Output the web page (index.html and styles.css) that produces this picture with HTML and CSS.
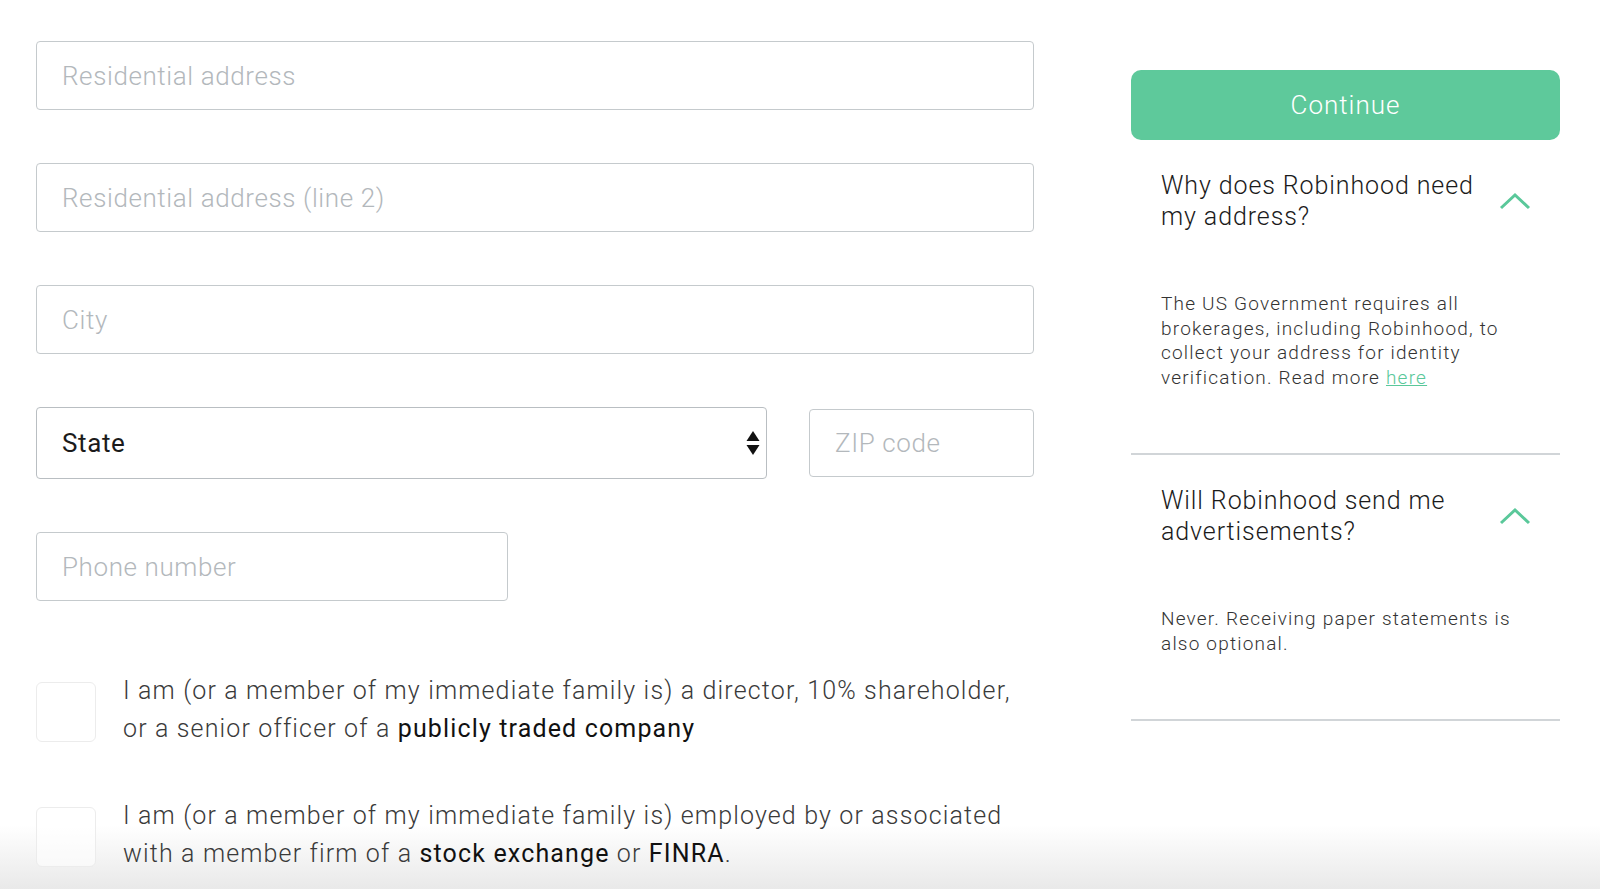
FILE: index.html
```html
<!DOCTYPE html>
<html lang="en">
<head>
<meta charset="utf-8">
<title>Address</title>
<link rel="stylesheet" href="styles.css">
</head>
<body>
<div class="fade"></div>
<div class="page">
  <main class="form">
    <div class="field"><span class="ph">Residential address</span></div>
    <div class="field"><span class="ph">Residential address (line 2)</span></div>
    <div class="field"><span class="ph">City</span></div>
    <div class="row">
      <div class="field select">
        <span class="val">State</span>
        <svg class="updown" width="14" height="26" viewBox="0 0 14 26"><path d="M7 1 L13.5 11 L0.5 11 Z" fill="#111"/><path d="M0.5 15 L13.5 15 L7 25 Z" fill="#111"/></svg>
      </div>
      <div class="field zip"><span class="ph">ZIP code</span></div>
    </div>
    <div class="field phone"><span class="ph">Phone number</span></div>

    <div class="checks">
      <label class="check">
        <span class="box"></span>
        <span class="ctext">I am (or a member of my immediate family is) a director, 10% shareholder, or a senior officer of a <b>publicly traded company</b></span>
      </label>
      <label class="check">
        <span class="box"></span>
        <span class="ctext">I am (or a member of my immediate family is) employed by or associated with a member firm of a <b>stock exchange</b> or <b>FINRA</b>.</span>
      </label>
    </div>
  </main>

  <aside class="side">
    <button class="continue">Continue</button>
    <section class="faq">
      <div class="q">
        <span class="qtext">Why does Robinhood need my address?</span>
        <svg class="chev" width="32" height="18" viewBox="0 0 32 18"><path d="M2 16 L16 3 L30 16" fill="none" stroke="#5ac89a" stroke-width="3"/></svg>
      </div>
      <p class="a">The US Government requires all brokerages, including Robinhood, to collect your address for identity verification. Read more <a href="#">here</a></p>
    </section>
    <section class="faq">
      <div class="q">
        <span class="qtext">Will Robinhood send me advertisements?</span>
        <svg class="chev" width="32" height="18" viewBox="0 0 32 18"><path d="M2 16 L16 3 L30 16" fill="none" stroke="#5ac89a" stroke-width="3"/></svg>
      </div>
      <p class="a">Never. Receiving paper statements is also optional.</p>
    </section>
  </aside>
</div>
</body>
</html>
```

FILE: styles.css
```css
html, body {
  margin: 0;
  padding: 0;
  background: #fff;
  height: 889px;
  overflow: hidden;
}
body {
  font-family: Roboto, "Liberation Sans", sans-serif;
  font-weight: 300;
  color: #222;
  position: relative;
}
.page {
  position: relative;
  z-index: 1;
  display: flex;
  padding: 41px 40px 0 36px;
  gap: 97px;
}
.form {
  width: 998px;
  display: flex;
  flex-direction: column;
  gap: 53px;
}
.field {
  box-sizing: border-box;
  height: 69px;
  border: 1px solid #c5cacd;
  border-radius: 4px;
  display: flex;
  align-items: center;
  padding: 0 25px;
  font-size: 26px;
  letter-spacing: 0.6px;
  background: #fff;
}
.ph { color: #b3b8bc; }
.row {
  display: flex;
  gap: 42px;
  align-items: center;
}
.select {
  width: 731px;
  height: 72px;
  justify-content: space-between;
  padding-right: 6px;
  border-color: #b9bec2;
}
.val { color: #1b1b1b; font-weight: 400; }
.zip { width: 225px; height: 68px; }
.phone { width: 472px; }
.checks {
  margin-top: 28px;
  display: flex;
  flex-direction: column;
  gap: 59px;
}
.check {
  display: flex;
  align-items: flex-start;
  gap: 27px;
}
.box {
  flex: none;
  box-sizing: border-box;
  width: 60px;
  height: 60px;
  border: 1px solid #ececec;
  border-radius: 6px;
  background: rgba(255,255,255,0.6);
}
.ctext {
  margin-top: -10px;
  font-size: 25px;
  line-height: 38px;
  letter-spacing: 1.15px;
  color: #3a3a3a;
  width: 890px;
}
.ctext b { font-weight: 400; color: #111; }
.side {
  width: 429px;
  padding-top: 29px;
  display: flex;
  flex-direction: column;
}
.continue {
  height: 70px;
  border: none;
  border-radius: 10px;
  background: #5ec99b;
  color: #fff;
  font-family: Roboto, "Liberation Sans", sans-serif;
  font-weight: 300;
  font-size: 26px;
  letter-spacing: 1px;
}
.faq {
  border-bottom: 2px solid #d1d5d8;
  padding: 30px 30px 63px 30px;
}
.q {
  display: flex;
  justify-content: space-between;
  align-items: center;
}
.qtext {
  width: 330px;
  font-size: 25px;
  line-height: 31px;
  letter-spacing: 0.9px;
  color: #1b1b1b;
}
.chev { flex: none; margin-right: -1px; }
.a {
  margin: 60px 0 0;
  width: 362px;
  font-size: 19px;
  line-height: 24.5px;
  letter-spacing: 1.2px;
  color: #333;
}
.a a { color: #5ac89a; }
.fade {
  position: absolute;
  left: 0;
  right: 0;
  bottom: 0;
  height: 64px;
  z-index: 0;
  background: linear-gradient(to bottom, rgba(236,236,236,0), rgba(233,233,233,1));
}
```
